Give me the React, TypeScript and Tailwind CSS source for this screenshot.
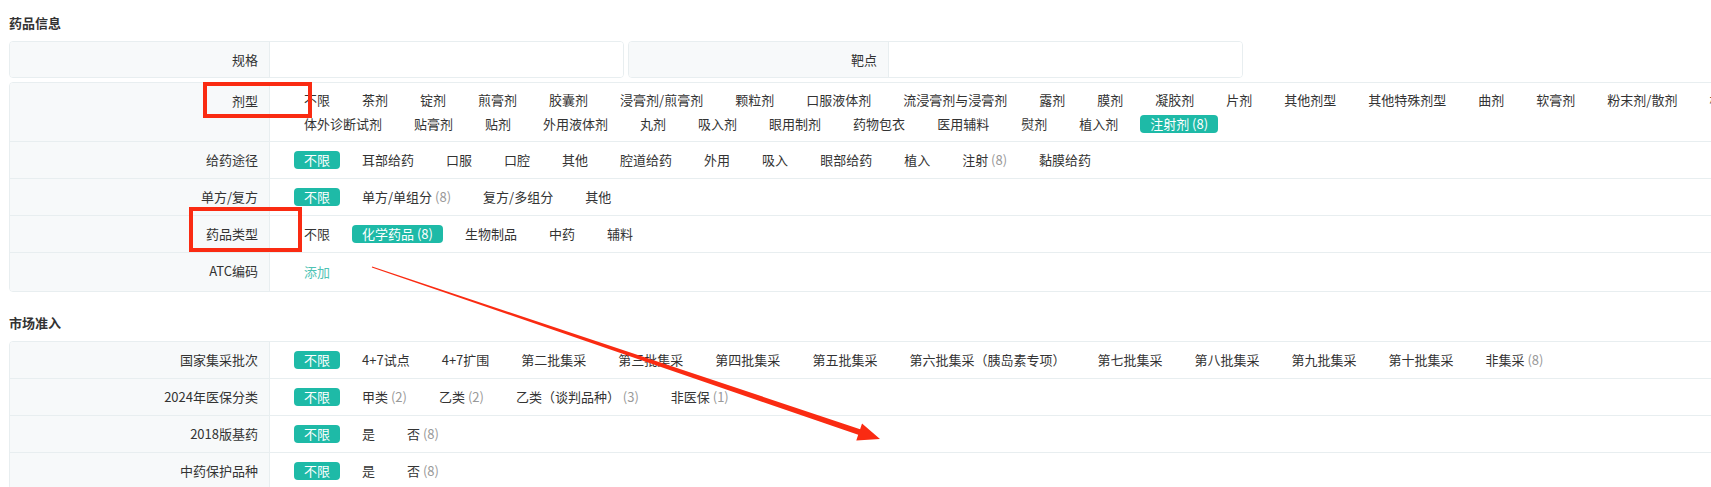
import React from 'react';

interface Opt {
  label: string;
  count?: number;
  active?: boolean;
}

const dosageForms: Opt[] = [
  { label: '不限' }, { label: '茶剂' }, { label: '锭剂' }, { label: '煎膏剂' }, { label: '胶囊剂' },
  { label: '浸膏剂/煎膏剂' }, { label: '颗粒剂' }, { label: '口服液体剂' }, { label: '流浸膏剂与浸膏剂' },
  { label: '露剂' }, { label: '膜剂' }, { label: '凝胶剂' }, { label: '片剂' }, { label: '其他剂型' },
  { label: '其他特殊剂型' }, { label: '曲剂' }, { label: '软膏剂' }, { label: '粉末剂/散剂' }, { label: '栓剂' },
  { label: '体外诊断试剂' }, { label: '贴膏剂' }, { label: '贴剂' }, { label: '外用液体剂' }, { label: '丸剂' },
  { label: '吸入剂' }, { label: '眼用制剂' }, { label: '药物包衣' }, { label: '医用辅料' }, { label: '熨剂' },
  { label: '植入剂' }, { label: '注射剂', count: 8, active: true },
];

const routes: Opt[] = [
  { label: '不限', active: true }, { label: '耳部给药' }, { label: '口服' }, { label: '口腔' }, { label: '其他' },
  { label: '腔道给药' }, { label: '外用' }, { label: '吸入' }, { label: '眼部给药' }, { label: '植入' },
  { label: '注射', count: 8 }, { label: '黏膜给药' },
];

const formula: Opt[] = [
  { label: '不限', active: true }, { label: '单方/单组分', count: 8 }, { label: '复方/多组分' }, { label: '其他' },
];

const drugTypes: Opt[] = [
  { label: '不限' }, { label: '化学药品', count: 8, active: true }, { label: '生物制品' }, { label: '中药' }, { label: '辅料' },
];

const batches: Opt[] = [
  { label: '不限', active: true }, { label: '4+7试点' }, { label: '4+7扩围' }, { label: '第二批集采' },
  { label: '第三批集采' }, { label: '第四批集采' }, { label: '第五批集采' }, { label: '第六批集采（胰岛素专项）' },
  { label: '第七批集采' }, { label: '第八批集采' }, { label: '第九批集采' }, { label: '第十批集采' },
  { label: '非集采', count: 8 },
];

const insurance: Opt[] = [
  { label: '不限', active: true }, { label: '甲类', count: 2 }, { label: '乙类', count: 2 },
  { label: '乙类（谈判品种）', count: 3 }, { label: '非医保', count: 1 },
];

const yesNo: Opt[] = [{ label: '不限', active: true }, { label: '是' }, { label: '否', count: 8 }];

function Option({ o }: { o: Opt }) {
  return (
    <span
      className={
        o.active
          ? 'h-[18px] leading-[18px] px-2.5 rounded-sm bg-[#1ebaa7] text-white whitespace-nowrap cursor-pointer'
          : 'h-[18px] leading-[18px] px-2.5 text-[#333] whitespace-nowrap cursor-pointer'
      }
    >
      {o.label}
      {o.count !== undefined && (
        <span className={o.active ? 'text-white' : 'text-[#999]'}>{` (${o.count})`}</span>
      )}
    </span>
  );
}

function FilterRow({
  label,
  options,
  last,
  children,
}: {
  label: string;
  options?: Opt[];
  last?: boolean;
  children?: React.ReactNode;
}) {
  return (
    <div className={last ? 'flex' : 'flex border-b border-[#e8eef0]'}>
      <div className="w-[260px] shrink-0 bg-[#f7f9fa] border-r border-[#e8eef0] pr-[11px] pt-[8px] leading-[20px] text-right text-[#333]">
        {label}
      </div>
      <div className="flex-1 min-h-9 pl-6 pr-4 py-[8px] flex flex-wrap items-center gap-x-3 gap-y-[6px]">
        {options?.map((o) => <Option key={o.label} o={o} />)}
        {children}
      </div>
    </div>
  );
}

function FieldCard({ label }: { label: string }) {
  return (
    <div className="h-[37px] flex border border-[#e8eef0] rounded-[4px] overflow-hidden">
      <div className="w-[260px] shrink-0 bg-[#f7f9fa] border-r border-[#e8eef0] pr-[11px] flex items-center justify-end text-[#333]">
        {label}
      </div>
      <div className="flex-1 bg-white" />
    </div>
  );
}

export default function App() {
  return (
    <div className="w-full h-[487px] overflow-hidden bg-white">
      <div className="relative w-[1871px] px-[9px] text-[13px] font-['Noto_Sans_CJK_SC','Noto_Sans',sans-serif]">
        <div className="pt-[14px] pb-[9px] leading-[18px] font-bold text-[#333]">药品信息</div>

        <div className="grid grid-cols-3 gap-1">
          <FieldCard label="规格" />
          <FieldCard label="靶点" />
        </div>

        <div className="mt-1 border border-[#e8eef0] rounded-[4px] overflow-hidden">
          <FilterRow label="剂型" options={dosageForms} />
          <FilterRow label="给药途径" options={routes} />
          <FilterRow label="单方/复方" options={formula} />
          <FilterRow label="药品类型" options={drugTypes} />
          <FilterRow label="ATC编码" last>
            <span className="h-[22px] leading-[22px] px-2.5 text-[#4fc3b4] cursor-pointer">添加</span>
          </FilterRow>
        </div>

        <div className="pt-[22px] pb-[9px] leading-[18px] font-bold text-[#333]">市场准入</div>

        <div className="border border-[#e8eef0] rounded-[4px] overflow-hidden">
          <FilterRow label="国家集采批次" options={batches} />
          <FilterRow label="2024年医保分类" options={insurance} />
          <FilterRow label="2018版基药" options={yesNo} />
          <FilterRow label="中药保护品种" options={yesNo} last />
        </div>

        {/* annotations */}
        <div className="absolute left-[203px] top-[82px] w-[109px] h-[36px] border-4 border-[#fa2b12] pointer-events-none" />
        <div className="absolute left-[189px] top-[207px] w-[113px] h-[45px] border-4 border-[#fa2b12] pointer-events-none" />
        <svg className="absolute left-0 top-0 pointer-events-none" width="1000" height="487">
          <polygon
            fill="#fa2b12"
            points="372.16,266.53 860.11,429.14 862.02,423.45 880,439 856.28,440.51 858.19,434.82 371.84,267.47"
          />
        </svg>
      </div>
    </div>
  );
}
